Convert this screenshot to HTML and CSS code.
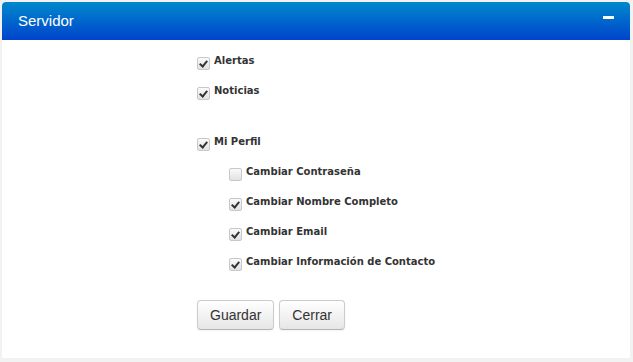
FILE: index.html
```html
<!DOCTYPE html>
<html>
<head>
<meta charset="utf-8">
<title>Servidor</title>
<link rel="stylesheet" href="styles.css">
</head>
<body>
<div class="panel">
  <div class="panel-head">
    <span class="panel-title">Servidor</span>
    <span class="collapse-icon"></span>
  </div>
  <div class="panel-body">
    <div class="row"><span class="chk on"></span><span class="lbl">Alertas</span></div>
    <div class="row"><span class="chk on"></span><span class="lbl">Noticias</span></div>
    <div class="row group"><span class="chk on"></span><span class="lbl">Mi Perfil</span></div>
    <div class="row sub"><span class="chk"></span><span class="lbl">Cambiar Contraseña</span></div>
    <div class="row sub"><span class="chk on"></span><span class="lbl">Cambiar Nombre Completo</span></div>
    <div class="row sub"><span class="chk on"></span><span class="lbl">Cambiar Email</span></div>
    <div class="row sub"><span class="chk on"></span><span class="lbl">Cambiar Información de Contacto</span></div>
    <div class="actions">
      <button class="btn">Guardar</button>
      <button class="btn">Cerrar</button>
    </div>
  </div>
</div>
</body>
</html>
```

FILE: styles.css
```css
body {
   margin: 0;
   padding: 2px 3px 0 2px;
   background-color: #f2f2f2;
   font-family: "Liberation Sans", Arial, sans-serif;
   height: 362px;
   box-sizing: border-box;
   overflow: hidden;
}

.panel {
   background-color: white;
   height: 356px;
}

.panel-head {
   height: 38px;
   display: flex;
   align-items: center;
   justify-content: space-between;
   padding: 0 16px 0 16px;
   border-radius: 4px 4px 0 0;
   background: linear-gradient(to bottom, #0088cc, #0044cc);
   color: white;
}

.panel-title {
   font-size: 15px;
   margin-top: -1px;
}

.collapse-icon {
   width: 11px;
   height: 3px;
   background-color: white;
   margin-top: -8px;
   margin-right: 0;
}

.panel-body {
   padding: 6px 0 0 195px;
}

.row {
   display: flex;
   align-items: center;
   height: 30px;
   font-family: "DejaVu Sans", Verdana, sans-serif;
   font-weight: bold;
   font-size: 10px;
   color: #333;
}

.row.group {
   margin-top: 21px;
}

.row.sub {
   padding-left: 32px;
}

.chk {
   width: 11px;
   height: 11px;
   border: 1px solid #c8c8c8;
   border-radius: 2px;
   background: linear-gradient(to bottom, #fafafa, #e2e2e2);
   margin-right: 4px;
   margin-top: 4px;
   position: relative;
}

.chk.on::after {
   content: "";
   position: absolute;
   left: 3px;
   top: 1px;
   width: 3px;
   height: 6px;
   border: solid #333;
   border-width: 0 2px 2px 0;
   transform: rotate(40deg);
}

.lbl {
   margin-top: -2px;
}

.actions {
   display: flex;
   gap: 5px;
   margin-top: 23px;
}

.btn {
   font-family: "Liberation Sans", Arial, sans-serif;
   font-size: 14px;
   color: #333;
   height: 30px;
   padding: 0 12px;
   border: 1px solid #ccc;
   border-bottom-color: #b3b3b3;
   border-radius: 4px;
   background: linear-gradient(to bottom, #ffffff, #e6e6e6);
   box-shadow: inset 0 1px 0 rgba(255,255,255,.2), 0 1px 2px rgba(0,0,0,.05);
}
```
